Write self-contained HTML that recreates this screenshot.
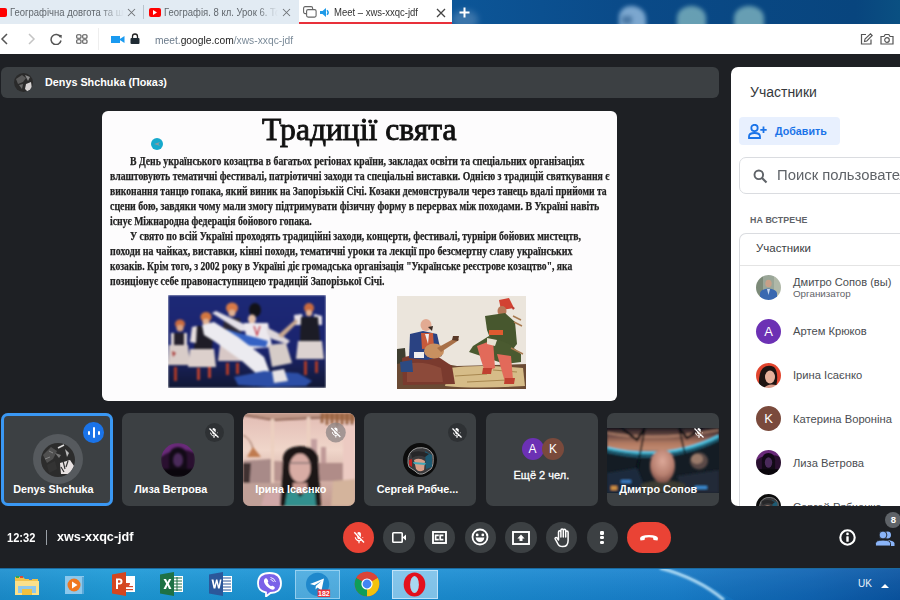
<!DOCTYPE html>
<html><head><meta charset="utf-8">
<style>
*{box-sizing:border-box;margin:0;padding:0}
html,body{width:900px;height:600px;overflow:hidden;background:#1e2024;font-family:"Liberation Sans",sans-serif;line-height:1}
.a{position:absolute}
.nw{white-space:nowrap}
#tabs{left:0;top:0;width:452px;height:24px;background:#e2ebf3}
#desk{left:452px;top:0;width:448px;height:24px;background:linear-gradient(90deg,#0c5698 0%,#0a4a88 40%,#08457e 90%,#0a5082 100%)}
#addr{left:0;top:24px;width:900px;height:30px;background:#fff}
#meet{left:0;top:54px;width:900px;height:514px;background:#1e2024}
#task{left:0;top:568px;width:900px;height:32px;background:linear-gradient(90deg,#1b9ad8 0%,#1a94d4 40%,#1576c4 60%,#0d62b4 80%,#0b5aae 100%)}
.tabt{font-size:10px;color:#61676d;top:7.8px;transform-origin:0 0}
.x{font-size:13px;color:#555;top:4px}
.ctrl{width:32px;height:32px;border-radius:50%;background:#3c4043;top:521px}
.tile{top:413px;width:112px;height:93px;border-radius:7px;background:#3c4043;overflow:hidden}
.tname{color:#fff;font-weight:bold;font-size:10.8px;white-space:nowrap}
.row{font-size:11.2px;color:#4a4d51;white-space:nowrap}
.av{width:25px;height:25px;border-radius:50%;left:755px}
.sl{left:0;font-family:"Liberation Serif",serif;font-weight:bold;font-size:12px;color:#222;-webkit-text-stroke:0.25px #222;white-space:nowrap;transform-origin:0 0}
</style></head><body>
<!-- TAB BAR -->
<div id="tabs" class="a"></div>
<div id="desk" class="a"></div>
<div id="addr" class="a"></div>
<div id="meet" class="a"></div>
<div id="task" class="a"></div>

<!-- tab 1 -->
<div class="a" style="left:0;top:8px;width:7px;height:9px;background:#f00;border-radius:0 2px 2px 0"></div>
<div class="a nw tabt" style="left:9.5px;width:120px;overflow:hidden;transform:scaleX(0.95)"><span style="-webkit-mask-image:linear-gradient(90deg,#000 78%,transparent 100%);display:inline-block;width:120px;overflow:hidden">Географічна довгота та шир</span></div>
<svg class="a" style="left:127px;top:8px" width="9" height="9"><path d="M1 1L8 8M8 1L1 8" stroke="#707478" stroke-width="1.05"/></svg>
<div class="a" style="left:143px;top:5px;width:1px;height:14px;background:#b9c3cc"></div>
<!-- tab 2 -->
<div class="a" style="left:149px;top:8px;width:12px;height:9px;background:#f00;border-radius:2px"></div>
<svg class="a" style="left:153px;top:10px" width="5" height="5"><path d="M0 0L4 2.5L0 5Z" fill="#fff"/></svg>
<div class="a nw tabt" style="left:164px;width:120px;overflow:hidden;transform:scaleX(0.95)"><span style="-webkit-mask-image:linear-gradient(90deg,#000 82%,transparent 100%);display:inline-block;width:120px;overflow:hidden">Географія. 8 кл. Урок 6. Топ</span></div>
<svg class="a" style="left:282px;top:8px" width="9" height="9"><path d="M1 1L8 8M8 1L1 8" stroke="#707478" stroke-width="1.05"/></svg>
<!-- active tab -->
<div class="a" style="left:299px;top:0;width:153px;height:24px;background:#fff"></div>
<div class="a" style="left:299px;top:22px;width:153px;height:2px;background:#e8303a"></div>
<svg class="a" style="left:303px;top:6px" width="14" height="12"><rect x="0.6" y="0.6" width="9" height="7" rx="1.5" fill="none" stroke="#666" stroke-width="1.1"/><rect x="3.6" y="3.6" width="9.5" height="7.5" rx="1.5" fill="#fff" stroke="#666" stroke-width="1.1"/></svg>
<svg class="a" style="left:320px;top:8px" width="10" height="9"><path d="M0 3H2.5L6 0V9L2.5 6H0Z" fill="#1e9ae8"/><path d="M7 2.2Q9.3 4.5 7 6.8" stroke="#1e9ae8" stroke-width="1.6" fill="none"/></svg>
<div class="a nw tabt" style="left:333.5px;color:#333;transform:scaleX(0.95)">Meet – xws-xxqc-jdf</div>
<svg class="a" style="left:436px;top:8px" width="10" height="10"><path d="M1 1L9 9M9 1L1 9" stroke="#444" stroke-width="1.3"/></svg>
<!-- plus -->
<svg class="a" style="left:459px;top:7px;z-index:2" width="11" height="11"><path d="M5.5 0.5V10.5M0.5 5.5H10.5" stroke="#fff" stroke-width="2"/></svg>
<!-- desktop icon blobs -->
<div class="a" style="left:452px;top:0;width:448px;height:24px;overflow:hidden">
<div class="a" style="left:0;top:10px;width:26px;height:20px;border-radius:50%;background:#5a8ab8;filter:blur(3px);opacity:.6"></div>
<div class="a" style="left:167px;top:6px;width:27px;height:24px;border-radius:45% 55% 0 0;background:#90b8dc;filter:blur(2px);opacity:.85"></div>
<div class="a" style="left:170px;top:16px;width:10px;height:8px;background:#2a5a8a;filter:blur(2px);opacity:.6"></div>
<div class="a" style="left:225px;top:6px;width:29px;height:24px;border-radius:50% 50% 0 0;background:#78aebc;filter:blur(2px);opacity:.85"></div>
<div class="a" style="left:282px;top:6px;width:30px;height:24px;border-radius:50% 50% 0 0;background:#78aebc;filter:blur(2px);opacity:.85"></div>
</div>


<!-- presenter bar -->
<div class="a" style="left:1px;top:67px;width:718px;height:31px;border-radius:6px;background:#3c4043"></div>
<svg class="a" style="left:14px;top:72.5px" width="19" height="19" viewBox="0 0 19 19"><defs><clipPath id="c3"><circle cx="9.5" cy="9.5" r="9.5"/></clipPath></defs><g clip-path="url(#c3)" style="filter:blur(0.35px)"><rect width="19" height="19" fill="#2a2a2a"/><path d="M2 6L8 2L12 5L9 9L4 11Z" fill="#5a5a5a"/><path d="M11 2L16 4L14 8Z" fill="#8a8a8a"/><path d="M12 11L17 9L18 16L14 19L11 16Z" fill="#d8d4d4"/><path d="M5 12L9 11L8 16Z" fill="#6a6a6a"/></g></svg>
<div class="a nw" style="left:45px;top:77px;color:#fff;font-weight:bold;font-size:10.8px">Denys Shchuka (Показ)</div>
<!-- slide -->
<div class="a" style="left:102px;top:111px;width:515px;height:290px;border-radius:6px;background:#fdfcfd"></div>
<div class="a" style="left:151px;top:138px;width:12px;height:12px;border-radius:50%;background:#17a9cc"></div>
<svg class="a" style="left:153px;top:141px" width="8" height="6"><path d="M1 3L7 1L5.5 3L7 5Z" fill="#8a9aa0"/></svg>
<div class="a nw" style="left:262px;top:112.5px;font-family:'Liberation Serif',serif;font-weight:normal;font-size:32px;color:#111;-webkit-text-stroke:0.9px #111;transform:scale(0.987,1);transform-origin:0 0">Традиції свята</div>
<div class="a sl" style="left:129.8px;top:154.65px;transform:scaleX(0.8119)">В День українського козацтва в багатьох регіонах країни, закладах освіти та спеціальних організаціях</div>
<div class="a sl" style="left:110.2px;top:169.65px;transform:scaleX(0.8144)">влаштовують тематичні фестивалі, патріотичні заходи та спеціальні виставки. Однією з традицій святкування є</div>
<div class="a sl" style="left:110.2px;top:184.65px;transform:scaleX(0.8071)">виконання танцю гопака, який виник на Запорізькій Січі. Козаки демонстрували через танець вдалі прийоми та</div>
<div class="a sl" style="left:110.2px;top:199.65px;transform:scaleX(0.8215)">сцени бою, завдяки чому мали змогу підтримувати фізичну форму в перервах між походами. В Україні навіть</div>
<div class="a sl" style="left:110.2px;top:214.65px;transform:scaleX(0.8123)">існує Міжнародна федерація бойового гопака.</div>
<div class="a sl" style="left:129.8px;top:229.65px;transform:scaleX(0.8126)">У свято по всій Україні проходять традиційні заходи, концерти, фестивалі, турніри бойових мистецтв,</div>
<div class="a sl" style="left:110.2px;top:244.65px;transform:scaleX(0.8251)">походи на чайках, виставки, кінні походи, тематичні уроки та лекції про безсмертну славу українських</div>
<div class="a sl" style="left:110.2px;top:259.65px;transform:scaleX(0.8009)">козаків. Крім того, з 2002 року в Україні діє громадська організація "Українське реєстрове козацтво", яка</div>
<div class="a sl" style="left:110.2px;top:274.65px;transform:scaleX(0.8160)">позиціонує себе правонаступницею традицій Запорізької Січі.</div>
<div class="a" style="left:168px;top:295px;width:158px;height:93px;overflow:hidden"><svg width="158" height="93" viewBox="0 0 158 93" style="filter:blur(0.8px)" filter="url(#bb)"><filter id="bb"><feGaussianBlur stdDeviation="0.8"/></filter>
<defs><linearGradient id="d1" x1="0" y1="0" x2="0" y2="1"><stop offset="0" stop-color="#1b2672"/><stop offset="0.6" stop-color="#18206a"/><stop offset="0.78" stop-color="#141a48"/><stop offset="1" stop-color="#0e1226"/></linearGradient></defs>
<rect width="158" height="93" fill="url(#d1)"/>
<rect x="0" y="0" width="158" height="93" fill="#2a3a90" opacity="0.15"/>
<!-- left girl -->
<ellipse cx="12" cy="29" rx="5" ry="4.5" fill="#c86a40"/>
<ellipse cx="12" cy="33" rx="3.5" ry="3.5" fill="#d8a080"/>
<path d="M3 38H19V50H3Z" fill="#e0d6d4"/>
<path d="M6 38H16V50H6Z" fill="#24202c"/>
<path d="M1 50H20L22 70H0Z" fill="#d8ccc8"/>
<path d="M4 56L8 58L5 62Z" fill="#a83a38"/>
<rect x="6" y="72" width="3" height="14" fill="#a83828"/>
<!-- girl 2 -->
<ellipse cx="38" cy="22" rx="5.5" ry="5" fill="#d27640"/>
<ellipse cx="38" cy="27" rx="3.5" ry="3.5" fill="#e0b090"/>
<path d="M28 31H46L44 54H26Z" fill="#1e1c26"/>
<path d="M24 32L29 31L28 48L22 47Z" fill="#e6dede"/>
<path d="M22 54H46L48 72H20Z" fill="#dcd0cc"/>
<rect x="29" y="73" width="3" height="12" fill="#b84030"/><rect x="40" y="72" width="3" height="11" fill="#b84030"/>
<!-- orange hair girl -->
<ellipse cx="64" cy="13" rx="6" ry="5.5" fill="#d87a48"/>
<ellipse cx="64" cy="18" rx="3.5" ry="3.5" fill="#e0b090"/>
<path d="M56 23H72L74 50H54Z" fill="#2a2634"/>
<path d="M52 50H76L78 66H50Z" fill="#d8c8c6"/>
<rect x="58" y="68" width="3" height="12" fill="#b03a28"/><rect x="68" y="68" width="3" height="11" fill="#b03a28"/>
<!-- central man arms/shirt -->
<path d="M44 18L48 16L78 30L80 36L72 36Z" fill="#e4e0e8"/>
<ellipse cx="87" cy="15" rx="6" ry="7" fill="#121218"/>
<ellipse cx="84" cy="24" rx="4" ry="4.5" fill="#e4c0a8"/>
<path d="M76 28H100L104 52L80 54Z" fill="#ece8ee"/>
<path d="M86 31L89 40L92 31" stroke="#c03040" stroke-width="1.2" fill="none"/>
<path d="M98 32L110 38L122 46L119 49L104 44L100 40Z" fill="#ddd6da"/>
<!-- blue sash -->
<path d="M58 34L78 40L100 46L98 52L74 50L56 40Z" fill="#3562c4"/>
<!-- white pants (kick) -->
<path d="M34 30L46 27L70 42L96 62L102 78L90 80L74 66L46 46L36 40Z" fill="#ecebf0"/>
<!-- seated man right -->
<path d="M100 50L118 48L124 68L104 72Z" fill="#d6ccc8"/>
<!-- blue bottom figure -->
<path d="M66 82L96 76L130 78L144 86L138 91L100 92L70 90Z" fill="#2c4ea6"/>
<path d="M104 76L116 74L120 86L106 88Z" fill="#e6e2e4"/>
<!-- right girl -->
<ellipse cx="141" cy="13" rx="5" ry="5" fill="#c86a40"/>
<ellipse cx="141" cy="18" rx="3.2" ry="3.2" fill="#e0b090"/>
<path d="M126 20L134 19L136 30L127 30Z" fill="#e8e2e8"/>
<path d="M146 19L154 21L154 30L147 30Z" fill="#e8e2e8"/>
<path d="M133 22H150L152 46H132Z" fill="#1c1c26"/>
<path d="M130 46H154L156 64H128Z" fill="#dcd2d0"/>
<rect x="136" y="66" width="3" height="14" fill="#a83a2a"/><rect x="147" y="66" width="3" height="12" fill="#a83a2a"/>
<path d="M110 40L128 24L130 27L114 43Z" fill="#c8a890"/>
</svg></div>
<div class="a" style="left:396.5px;top:295.5px;width:129.5px;height:93px;overflow:hidden"><svg width="130" height="93" viewBox="0 0 130 93" style="filter:blur(0.7px)">
<rect width="130" height="93" fill="#ebe5dc"/>
<path d="M0 67Q30 64 60 70L130 68V93H0Z" fill="#6a4a34"/>
<path d="M52 72Q80 68 126 72L128 90Q80 93 48 90Z" fill="#d6bc88"/>
<path d="M58 80L90 78M70 86L110 84M96 74L120 76" stroke="#a88850" stroke-width="1.2"/>
<path d="M0 53L8 52L9 66L0 68Z" fill="#3e3e30"/>
<!-- seated cossack -->
<path d="M5 62Q20 56 40 60L55 70L58 88L6 89Z" fill="#7a3a2e"/>
<path d="M10 68Q25 64 44 72L46 86L10 86Z" fill="#8c4a3a"/>
<path d="M3 66L15 64L16 76L4 76Z" fill="#2c4a82"/>
<path d="M13 38L26 35L40 38L45 60L30 64L12 62Z" fill="#2a4282"/>
<path d="M24 37L36 37L37 52L25 53Z" fill="#c85a3a"/>
<path d="M28 38L32 38L31 48Z" fill="#eee"/>
<ellipse cx="29" cy="29" rx="5.5" ry="6" fill="#e2aa92"/>
<path d="M31 31L36 30L35 35Z" fill="#3a2a22"/>
<ellipse cx="37" cy="55" rx="10" ry="7.5" fill="#c89060"/>
<path d="M40 52L60 41L62 44L44 56Z" fill="#a87048"/>
<path d="M56 40L62 40L61 45L55 44Z" fill="#5a3a28"/>
<rect x="17" y="56" width="10" height="6" fill="#f0eeee"/>
<!-- dancing cossack -->
<path d="M102 4L112 2L117 12L104 14Z" fill="#d24232"/>
<path d="M114 10L118 12L116 14Z" fill="#b83a30"/>
<ellipse cx="105" cy="15" rx="4.5" ry="5" fill="#b87858"/>
<path d="M88 20L108 17L118 26L120 48L112 58L96 50L90 34Z" fill="#47572e"/>
<path d="M76 50L92 40L112 48L124 58L124 66L108 68L90 62L72 56Z" fill="#4a5a30"/>
<path d="M92 34L106 34L106 39L92 39Z" fill="#e05a30"/>
<path d="M80 50L96 44L98 72L88 76L84 64Z" fill="#e26a5a"/>
<path d="M100 58L114 60L116 84L108 86L104 72Z" fill="#e26a5a"/>
<path d="M86 72L95 72L94 78L85 78Z" fill="#c04030"/><path d="M108 82L118 82L117 88L107 88Z" fill="#c04030"/>
<path d="M116 20L124 24M117 26L125 30M114 52L126 58" stroke="#a87a50" stroke-width="1.4"/>
<path d="M90 42L100 44L98 50L90 48Z" fill="#e8e0d0"/>
</svg></div>


<!-- tiles -->
<div class="a tile" style="left:1px"></div>
<div class="a" style="left:1px;top:413px;width:112px;height:93px;border-radius:7px;border:3px solid #3a98f4"></div>
<div class="a" style="left:32.5px;top:434.4px;width:50px;height:50px;border-radius:50%;background:#565a5e"></div>
<svg class="a" style="left:40.5px;top:442.5px" width="34" height="34" viewBox="0 0 34 34"><defs><clipPath id="c4"><circle cx="17" cy="17" r="17"/></clipPath></defs><g clip-path="url(#c4)" style="filter:blur(0.5px)">
<rect width="34" height="34" fill="#2c2c2c"/>
<path d="M2 12L10 4L16 8L12 16L6 20Z" fill="#505050"/>
<path d="M6 22L14 18L16 26L8 30Z" fill="#333"/>
<path d="M17 5L23 2" stroke="#ddd" stroke-width="1.8"/>
<path d="M24 6L28 10L26 14Z" fill="#bbb"/>
<path d="M14 10L20 12L18 15Z" fill="#777"/>
<path d="M19 20L29 17L33 23L29 31L20 31Z" fill="#e8e2e2"/>
<path d="M22 18L24 26M27 18L25 24M20 24L23 29" stroke="#333" stroke-width="1.2"/>
<path d="M8 8L12 10M4 16L9 14" stroke="#888" stroke-width="1"/>
</g></svg>
<div class="a" style="left:83.3px;top:422.3px;width:20.5px;height:20.5px;border-radius:50%;background:#1a73e8"></div>
<div class="a" style="left:92.5px;top:427px;width:2.2px;height:11px;border-radius:1px;background:#fff"></div>
<div class="a" style="left:87.5px;top:430.5px;width:2.2px;height:4px;border-radius:1px;background:#fff"></div>
<div class="a" style="left:97.5px;top:430.5px;width:2.2px;height:4px;border-radius:1px;background:#fff"></div>
<div class="a tname" style="left:13.2px;top:484.3px">Denys Shchuka</div>

<div class="a tile" style="left:122px"></div>
<div class="a" style="left:204.9px;top:423.0px;width:19px;height:19px;border-radius:50%;background:#2e3134"></div><svg class="a" style="left:208.4px;top:426.5px" width="12" height="12" viewBox="0 0 12 12"><path d="M4.3 2.2A1.8 1.8 0 0 1 7.7 2.5V5.5L4.3 2.2Z" fill="#fff"/><path d="M4.3 4.5V5.8A1.8 1.8 0 0 0 6.9 7.3Z" fill="#fff"/><path d="M2.6 5.6A3.4 3.4 0 0 0 8 8.3M9.3 6.2A3.4 3.4 0 0 0 9.4 5.6" stroke="#fff" stroke-width="1" fill="none"/><path d="M6 9V11" stroke="#fff" stroke-width="1"/><path d="M1.5 1.5L10.5 10.5" stroke="#fff" stroke-width="1.2"/></svg>
<svg class="a" style="left:161.2px;top:442.5px" width="34" height="34" viewBox="0 0 34 34"><defs><clipPath id="c5"><circle cx="17" cy="17" r="17"/></clipPath></defs><g clip-path="url(#c5)" style="filter:blur(0.8px)">
<rect width="34" height="34" fill="#2a1030"/>
<path d="M0 0H34V10Q17 2 0 14Z" fill="#6a2a7a"/>
<path d="M8 34V14Q9 4 17 4Q25 4 26 14V34Z" fill="#120a16"/>
<ellipse cx="17" cy="17" rx="5" ry="7" fill="#4a2a5a"/>
<rect x="0" y="26" width="34" height="8" fill="#0a060c"/>
</g></svg>
<div class="a tname" style="left:134.2px;top:484.3px">Лиза Ветрова</div>

<div class="a" style="left:243px;top:413px;width:112px;height:93px;border-radius:7px;overflow:hidden"><svg width="112" height="93" viewBox="0 0 112 93">
<defs><filter id="bl3"><feGaussianBlur stdDeviation="1"/></filter>
<linearGradient id="ig1" x1="0" y1="0" x2="0" y2="1"><stop offset="0" stop-color="#e2bcb4"/><stop offset="0.4" stop-color="#f0d6ca"/><stop offset="0.7" stop-color="#d4b0a6"/><stop offset="1" stop-color="#c09a90"/></linearGradient></defs>
<rect width="112" height="93" fill="url(#ig1)"/>
<g filter="url(#bl3)">
<path d="M0 0H112V4L30 7L0 2Z" fill="#c09888"/>
<path d="M0 2L30 7L112 3" stroke="#7a5040" stroke-width="1.5" fill="none"/>
<rect x="28" y="6" width="3" height="66" fill="#ecd0c0"/>
<rect x="64" y="4" width="3" height="64" fill="#ecd0c0"/>
<path d="M0 48L28 46V70H0Z" fill="#a88a88"/>
<path d="M31 48L64 50V68H31Z" fill="#b89490"/>
<rect x="68" y="26" width="6" height="30" fill="#c4a0a0"/>
<rect x="78" y="34" width="5" height="26" fill="#c09a98"/>
<path d="M67 50H100V68H67Z" fill="#b08c88"/>
<path d="M78 0H112V8L78 6Z" fill="#b07a5a"/><path d="M79 0V10M84 0V12M89 0V11M94 0V13M99 0V12M104 0V14M109 0V13" stroke="#94603e" stroke-width="2.6"/>
<rect x="100" y="12" width="12" height="58" fill="#eccac2"/>
<path d="M0 22Q8 26 10 36" stroke="#8a6050" stroke-width="1" fill="none"/>
<path d="M4 44L10 34L18 44Z" fill="#c07a50"/>
<path d="M0 50L8 50L6 80L0 82Z" fill="#403030"/>
<path d="M0 70H40V93H0Z" fill="#c0a098"/>
<path d="M90 68L112 66V93H88Z" fill="#d4b49c"/>
<path d="M22 80L42 78L44 93H18Z" fill="#d0a8a8"/>
<path d="M40 44Q42 34 57 33Q72 33 75 44L78 93H37Z" fill="#1e1614"/>
<ellipse cx="57" cy="55" rx="10.5" ry="14.5" fill="#d8aca4"/>
<path d="M46 50H68" stroke="#7a6868" stroke-width="1.2"/>
<path d="M50 70H64V80H50Z" fill="#c89890"/>
<path d="M44 80L52 77L57 84L64 77L72 80L73 93H42Z" fill="#33908e"/>
</g>
<circle cx="92.8" cy="19.5" r="10" fill="#8c8484" opacity="0.75"/>
<g transform="translate(86.8,13.5)"><path d="M4.3 2.2A1.8 1.8 0 0 1 7.7 2.5V5.5L4.3 2.2Z" fill="#fff"/><path d="M4.3 4.5V5.8A1.8 1.8 0 0 0 6.9 7.3Z" fill="#fff"/><path d="M2.6 5.6A3.4 3.4 0 0 0 8 8.3M9.3 6.2A3.4 3.4 0 0 0 9.4 5.6" stroke="#fff" stroke-width="1" fill="none"/><path d="M6 9V11" stroke="#fff" stroke-width="1"/><path d="M1.5 1.5L10.5 10.5" stroke="#fff" stroke-width="1.2"/></g>
</svg></div>
<div class="a tname" style="left:255.2px;top:484.3px">Ірина Ісаєнко</div>

<div class="a tile" style="left:364px"></div>
<div class="a" style="left:447.5px;top:423.0px;width:19px;height:19px;border-radius:50%;background:#2e3134"></div><svg class="a" style="left:451px;top:426.5px" width="12" height="12" viewBox="0 0 12 12"><path d="M4.3 2.2A1.8 1.8 0 0 1 7.7 2.5V5.5L4.3 2.2Z" fill="#fff"/><path d="M4.3 4.5V5.8A1.8 1.8 0 0 0 6.9 7.3Z" fill="#fff"/><path d="M2.6 5.6A3.4 3.4 0 0 0 8 8.3M9.3 6.2A3.4 3.4 0 0 0 9.4 5.6" stroke="#fff" stroke-width="1" fill="none"/><path d="M6 9V11" stroke="#fff" stroke-width="1"/><path d="M1.5 1.5L10.5 10.5" stroke="#fff" stroke-width="1.2"/></svg>
<svg class="a" style="left:403px;top:442.5px" width="34" height="34" viewBox="0 0 34 34"><g style="filter:blur(0.4px)">
<circle cx="17" cy="17" r="17" fill="#0c0c0c"/>
<path d="M5 20Q4 8 14 5Q26 3 30 12Q31 22 28 26L22 30Q16 33 12 28L6 24Z" fill="#3a3a3c" stroke="#a8a8a8" stroke-width="0.9"/>
<path d="M22 8L29 12L29 24L23 26Z" fill="#1e5a72"/>
<path d="M6 17L9 16L9 24L6 22Z" fill="#c02020"/>
<path d="M11 17Q16 14 22 18L21 27Q16 30 13 26Z" fill="#d8a08a"/>
<path d="M10 19L23 20L22 22L11 21Z" fill="#40a8b8"/>
<path d="M8 10Q16 6 26 11L22 14Q15 11 9 15Z" fill="#262628"/>
</g></svg>
<div class="a tname" style="left:376.7px;top:484.3px">Сергей Рябче...</div>

<div class="a tile" style="left:486px"></div>
<div class="a" style="left:521.5px;top:437.6px;width:22px;height:22px;border-radius:50%;background:#6c31b4"></div>
<div class="a nw" style="left:521.5px;top:443px;width:22px;text-align:center;font-size:12px;color:#fff">A</div>
<div class="a" style="left:542px;top:437.6px;width:22px;height:22px;border-radius:50%;background:#7a4a3c"></div>
<div class="a nw" style="left:542px;top:443px;width:22px;text-align:center;font-size:12px;color:#fff">K</div>
<div class="a nw" style="left:513.5px;top:469.6px;font-size:11px;color:#fff;-webkit-text-stroke:0.3px #fff">Ещё 2 чел.</div>

<div class="a" style="left:607px;top:413px;width:112px;height:93px;border-radius:7px;overflow:hidden;background:#3c4043"><svg class="a" style="left:0;top:14.7px" width="112" height="65" viewBox="0 0 112 65">
<defs><filter id="bl4"><feGaussianBlur stdDeviation="1"/></filter>
<linearGradient id="pg1" x1="0" y1="0" x2="0" y2="1"><stop offset="0" stop-color="#221c22"/><stop offset="0.3" stop-color="#6a4a44"/><stop offset="0.6" stop-color="#b07860"/><stop offset="0.85" stop-color="#c08a70"/><stop offset="1" stop-color="#7a5448"/></linearGradient></defs>
<rect width="112" height="65" fill="#141c24"/>
<g filter="url(#bl4)">
<path d="M0 0H112V8Q60 34 0 20Z" fill="url(#pg1)"/>
<path d="M0 5Q50 14 112 2" stroke="#d8a080" stroke-width="2" fill="none" opacity="0.6"/>
<path d="M0 20Q60 34 112 8" stroke="#48c8e8" stroke-width="2.8" fill="none"/>
<path d="M0 23.5Q60 37.5 112 11.5" stroke="#1a5a70" stroke-width="3" fill="none"/>
<path d="M0 0L14 0L30 12L38 0M72 0L80 10L96 0" stroke="#0a0e12" stroke-width="2.5" fill="none"/>
<path d="M38 0L30 42M72 0L78 26" stroke="#0a1014" stroke-width="1.6"/>
<ellipse cx="92" cy="33" rx="9" ry="8.5" fill="#5a4a46"/>
<ellipse cx="90" cy="31" rx="6" ry="5" fill="#9a7a6a"/>
<path d="M0 45L30 40L40 65H0Z" fill="#1c2c3c"/>
<path d="M70 48L112 42V65H76Z" fill="#202c38"/>
<rect x="4" y="58" width="6" height="4" fill="#d09040"/>
<rect x="14" y="52" width="10" height="3" fill="#3a7ac0"/>
<rect x="88" y="58" width="12" height="3" fill="#3a8ad0"/>
<path d="M34 56Q56 48 78 56V65H34Z" fill="#3a3a30"/>
<radialGradient id="fg" cx="0.5" cy="0.35" r="0.6"><stop offset="0" stop-color="#dca898"/><stop offset="0.7" stop-color="#b88070"/><stop offset="1" stop-color="#8a5a50"/></radialGradient><ellipse cx="55.5" cy="38" rx="12.5" ry="16.5" fill="url(#fg)"/>
</g>
</svg>
<svg class="a" style="left:86px;top:13.5px" width="12" height="12" viewBox="0 0 12 12"><path d="M4.3 2.2A1.8 1.8 0 0 1 7.7 2.5V5.5L4.3 2.2Z" fill="#fff"/><path d="M4.3 4.5V5.8A1.8 1.8 0 0 0 6.9 7.3Z" fill="#fff"/><path d="M2.6 5.6A3.4 3.4 0 0 0 8 8.3M9.3 6.2A3.4 3.4 0 0 0 9.4 5.6" stroke="#fff" stroke-width="1" fill="none"/><path d="M6 9V11" stroke="#fff" stroke-width="1"/><path d="M1.5 1.5L10.5 10.5" stroke="#fff" stroke-width="1.2"/></svg>
</div>
<div class="a tname" style="left:619.2px;top:484.3px">Дмитро Сопов</div>


<!-- control bar -->
<div class="a nw" style="left:7.3px;top:530.6px;font-size:13px;font-weight:bold;color:#fff;transform:scaleX(0.855);transform-origin:0 0">12:32</div>
<div class="a" style="left:46px;top:530px;width:1px;height:15px;background:#9aa0a6"></div>
<div class="a nw" style="left:56.5px;top:531px;font-size:12.4px;font-weight:bold;color:#fff;transform:scaleX(1.02);transform-origin:0 0">xws-xxqc-jdf</div>
<div class="a" style="left:343.0px;top:521.5px;width:31.4px;height:31.4px;border-radius:50%;background:#ea4335"></div>
<svg class="a" style="left:352.5px;top:531px" width="12" height="13" viewBox="0 0 12 13"><path d="M4.2 2.3A1.9 1.9 0 0 1 7.9 2.6V6.2Z" fill="#fff"/><path d="M4.2 4.6V6.3A1.9 1.9 0 0 0 7.2 7.8Z" fill="#fff"/><path d="M2.3 6.2A3.8 3.8 0 0 0 8.2 9.1M9.6 6.8A3.8 3.8 0 0 0 9.8 6.2" stroke="#fff" stroke-width="1.2" fill="none"/><path d="M6 10V12.2" stroke="#fff" stroke-width="1.2"/><path d="M1.3 1.3L11 11.5" stroke="#fff" stroke-width="1.4"/></svg>
<div class="a" style="left:383.3px;top:521.5px;width:31.4px;height:31.4px;border-radius:50%;background:#3c4043"></div>
<svg class="a" style="left:392px;top:532px" width="15" height="11" viewBox="0 0 15 11"><rect x="0.8" y="0.8" width="9.4" height="9.4" rx="0.8" fill="none" stroke="#fff" stroke-width="1.6"/><path d="M10.5 5.5L14 2.5V8.5Z" fill="#fff"/></svg>
<div class="a" style="left:423.6px;top:521.5px;width:31.4px;height:31.4px;border-radius:50%;background:#3c4043"></div>
<svg class="a" style="left:432.3px;top:531px" width="15" height="13" viewBox="0 0 15 13"><rect x="1" y="1" width="13" height="11" fill="none" stroke="#fff" stroke-width="1.9"/><path d="M6.8 4.3H3.6V8.7H6.8M11.4 4.3H8.2V8.7H11.4" stroke="#fff" stroke-width="1.7" fill="none"/></svg>
<div class="a" style="left:464.7px;top:521.5px;width:31.4px;height:31.4px;border-radius:50%;background:#3c4043"></div>
<svg class="a" style="left:471.4px;top:528.2px" width="18" height="18" viewBox="0 0 18 18"><circle cx="9" cy="9" r="7.5" fill="none" stroke="#fff" stroke-width="1.8"/><circle cx="6.2" cy="6.9" r="1.4" fill="#fff"/><circle cx="11.8" cy="6.9" r="1.4" fill="#fff"/><path d="M4.6 9.6H13.4Q12.8 14 9 14T4.6 9.6Z" fill="#fff"/></svg>
<div class="a" style="left:505.3px;top:521.5px;width:31.4px;height:31.4px;border-radius:50%;background:#3c4043"></div>
<svg class="a" style="left:512px;top:530.5px" width="18" height="14" viewBox="0 0 18 14"><rect x="1" y="1" width="16" height="12" fill="none" stroke="#fff" stroke-width="1.9"/><path d="M9 3.6L12.6 7.4H10.5V10H7.5V7.4H5.4Z" fill="#fff"/></svg>
<div class="a" style="left:546.0px;top:521.5px;width:31.4px;height:31.4px;border-radius:50%;background:#3c4043"></div>
<svg class="a" style="left:553.5px;top:527.5px" width="16" height="20" viewBox="0 0 16 20"><path d="M4.5 12V4A1.2 1.2 0 0 1 6.9 4V9V2.2A1.2 1.2 0 0 1 9.3 2.2V9V2.5A1.2 1.2 0 0 1 11.7 2.5V9V4.2A1.2 1.2 0 0 1 14.1 4.2V12.5Q14.1 18.6 8.6 18.6Q5 18.6 3.5 15.2L1.2 11A1.1 1.1 0 0 1 3 9.8L4.5 12Z" fill="none" stroke="#fff" stroke-width="1.5" stroke-linejoin="round"/></svg>
<div class="a" style="left:586.5px;top:521.5px;width:31.4px;height:31.4px;border-radius:50%;background:#3c4043"></div>
<div class="a" style="left:600.3px;top:531.2px;width:3.8px;height:3.4px;border-radius:1.2px;background:#fff"></div>
<div class="a" style="left:600.3px;top:535.9px;width:3.8px;height:3.4px;border-radius:1.2px;background:#fff"></div>
<div class="a" style="left:600.3px;top:540.6px;width:3.8px;height:3.4px;border-radius:1.2px;background:#fff"></div>
<div class="a" style="left:627px;top:521.7px;width:44px;height:31px;border-radius:16px;background:#ea4335"></div>
<svg class="a" style="left:639px;top:533px" width="20" height="9" viewBox="0 0 20 9"><path d="M1 5.5Q1 2 10 2T19 5.5L18.5 7.5L14.5 7L14 4.8Q12 4.2 10 4.2T6 4.8L5.5 7L1.5 7.5Z" fill="#fff"/></svg>
<svg class="a" style="left:838.5px;top:529px" width="17" height="17" viewBox="0 0 17 17"><circle cx="8.5" cy="8.5" r="7.2" fill="none" stroke="#fff" stroke-width="2.1"/><rect x="7.3" y="7.2" width="2.4" height="5.6" rx="0.6" fill="#fff"/><circle cx="8.5" cy="4.9" r="1.3" fill="#fff"/></svg>
<svg class="a" style="left:875px;top:530px" width="20" height="17" viewBox="0 0 20 17"><circle cx="12.6" cy="5" r="3.4" fill="#8ab4f8"/><path d="M12 10Q19.5 10.6 19.5 13.5V16H12Z" fill="#8ab4f8"/><circle cx="8" cy="5" r="3.9" fill="#8ab4f8" stroke="#1e2024" stroke-width="0.9"/><path d="M0.5 16V13.5Q0.5 10.1 8 10.1T15.5 13.5V16Z" fill="#8ab4f8" stroke="#1e2024" stroke-width="0.9"/></svg>
<div class="a" style="left:885.4px;top:511.6px;width:16px;height:16px;border-radius:50%;background:#5f6368"></div>
<div class="a nw" style="left:885.4px;top:515px;width:16px;text-align:center;font-size:9.5px;font-weight:bold;color:#fff">8</div>

<!-- participants panel -->
<div class="a" style="left:731px;top:67px;width:169px;height:439px;border-radius:7px 0 0 7px;background:#fff;overflow:hidden">
<div class="a nw" style="left:19px;top:18.1px;font-size:14px;color:#35383c">Участники</div>
<div class="a" style="left:8px;top:50px;width:101px;height:28px;border-radius:4px;background:#e8f0fe"></div>
<svg class="a" style="left:17px;top:57px" width="20" height="15"><circle cx="6.5" cy="4" r="3.2" fill="none" stroke="#1a73e8" stroke-width="1.8"/><path d="M1 14V12.5C1 10 4 9 6.5 9S12 10 12 12.5V14Z" fill="none" stroke="#1a73e8" stroke-width="1.8"/><path d="M15.5 2.5V9M12.3 5.8H18.7" stroke="#1a73e8" stroke-width="1.8"/></svg>
<div class="a nw" style="left:44px;top:59.4px;font-size:10.7px;font-weight:bold;color:#1a73e8">Добавить</div>
<div class="a" style="left:8px;top:90px;width:180px;height:37px;border-radius:7px;border:1px solid #dadce0"></div>
<svg class="a" style="left:22px;top:102px" width="15" height="15"><circle cx="5.8" cy="5.8" r="4.3" fill="none" stroke="#5f6368" stroke-width="1.9"/><path d="M9 9L13.5 13.5" stroke="#5f6368" stroke-width="2.1"/></svg>
<div class="a nw" style="left:46px;top:101.2px;font-size:14px;color:#5f6368;transform:scaleX(1.06);transform-origin:0 0">Поиск пользователей</div>
<div class="a nw" style="left:19px;top:148.5px;font-size:8.8px;font-weight:bold;color:#5f6368;letter-spacing:0.1px">НА ВСТРЕЧЕ</div>
<div class="a" style="left:8px;top:166px;width:180px;height:300px;border-radius:7px 0 0 0;border:1px solid #dadce0;border-right:none;border-bottom:none"></div>
<div class="a nw" style="left:25px;top:175.7px;font-size:11.5px;color:#3c4043">Участники</div>
<div class="a" style="left:9px;top:198px;width:170px;height:1px;background:#e4e4e4"></div>

<svg class="a" style="left:24.5px;top:207.5px" width="25" height="25" viewBox="0 0 25 25"><defs><clipPath id="c1"><circle cx="12.5" cy="12.5" r="12.5"/></clipPath></defs><g clip-path="url(#c1)" style="filter:blur(0.4px)"><rect width="25" height="25" fill="#9aa698"/><rect x="0" y="0" width="7" height="25" fill="#7c8a78"/><rect x="18" y="0" width="7" height="25" fill="#b0b8a8"/><ellipse cx="12.5" cy="8.5" rx="3.2" ry="3.8" fill="#c8a088"/><path d="M4 25V18Q5 14 12.5 13.5Q20 14 21 18V25Z" fill="#3a68b0"/><path d="M11 14L12.5 20L14 14Z" fill="#c8d8f0"/></g></svg>
<div class="a nw row" style="left:62px;top:209.6px;font-size:11.1px">Дмитро Сопов (вы)</div>
<div class="a nw" style="left:62px;top:222.1px;font-size:9.8px;color:#5f6368">Организатор</div>
<div class="a" style="left:25px;top:252px;width:25px;height:25px;border-radius:50%;background:#6c31b4"></div>
<div class="a nw" style="left:25px;top:258px;width:25px;text-align:center;font-size:13px;color:#fff">A</div>
<div class="a nw row" style="left:62px;top:259.1px">Артем Крюков</div>
<svg class="a" style="left:24.5px;top:295.5px" width="25" height="25" viewBox="0 0 25 25"><defs><clipPath id="c2"><circle cx="12.5" cy="12.5" r="12.5"/></clipPath></defs><g clip-path="url(#c2)" style="filter:blur(0.3px)"><rect width="25" height="25" fill="#e2452e"/><path d="M3 25Q2 10 7 5Q12 1 18 4Q22 8 21 18L20 25Z" fill="#1e1412"/><ellipse cx="14" cy="14" rx="5" ry="6.5" fill="#e6b09a"/><path d="M8 25Q12 20 20 22V25Z" fill="#d89a88"/></g></svg>
<div class="a nw row" style="left:62px;top:303.1px">Ірина Ісаєнко</div>
<div class="a" style="left:25px;top:339px;width:25px;height:25px;border-radius:50%;background:#7a4a3c"></div>
<div class="a nw" style="left:25px;top:345px;width:25px;text-align:center;font-size:13px;color:#fff">K</div>
<div class="a nw row" style="left:62px;top:347.1px">Катерина Вороніна</div>
<svg class="a" style="left:24.5px;top:382.5px" width="25" height="25" viewBox="0 0 34 34"><defs><clipPath id="c6"><circle cx="17" cy="17" r="17"/></clipPath></defs><g clip-path="url(#c6)" style="filter:blur(0.6px)"><rect width="34" height="34" fill="#2a1030"/><path d="M0 0H34V10Q17 2 0 14Z" fill="#6a2a7a"/><path d="M8 34V14Q9 4 17 4Q25 4 26 14V34Z" fill="#120a16"/><ellipse cx="17" cy="17" rx="5" ry="7" fill="#4a2a5a"/><rect x="0" y="26" width="34" height="8" fill="#0a060c"/></g></svg>
<div class="a nw row" style="left:62px;top:391.1px">Лиза Ветрова</div>
<svg class="a" style="left:24.5px;top:426.5px" width="25" height="25" viewBox="0 0 34 34"><g style="filter:blur(0.3px)"><circle cx="17" cy="17" r="17" fill="#0c0c0c"/><path d="M5 20Q4 8 14 5Q26 3 30 12Q31 22 28 26L22 30Q16 33 12 28L6 24Z" fill="#3a3a3c" stroke="#a8a8a8" stroke-width="0.9"/><path d="M22 8L29 12L29 24L23 26Z" fill="#1e5a72"/><path d="M6 17L9 16L9 24L6 22Z" fill="#c02020"/><path d="M11 17Q16 14 22 18L21 27Q16 30 13 26Z" fill="#d8a08a"/><path d="M10 19L23 20L22 22L11 21Z" fill="#40a8b8"/><path d="M8 10Q16 6 26 11L22 14Q15 11 9 15Z" fill="#262628"/></g></svg>
<div class="a nw row" style="left:62px;top:435.1px">Сергей Рябченко</div>
</div>

<!-- taskbar -->
<svg class="a" style="left:0;top:568px" width="900" height="32" viewBox="0 0 900 32">
<defs>
<linearGradient id="tb" x1="0" y1="0" x2="1" y2="0"><stop offset="0" stop-color="#1a8fd0"/><stop offset="0.12" stop-color="#1c9ad8"/><stop offset="0.5" stop-color="#1a8ed4"/><stop offset="0.75" stop-color="#1780ce"/><stop offset="0.9" stop-color="#106abc"/><stop offset="1" stop-color="#0a58a8"/></linearGradient>
<linearGradient id="tbv" x1="0" y1="0" x2="0" y2="1"><stop offset="0" stop-color="#fff" stop-opacity="0.08"/><stop offset="1" stop-color="#000" stop-opacity="0.06"/></linearGradient>
<filter id="tbl"><feGaussianBlur stdDeviation="1.2"/></filter>
</defs>
<rect width="900" height="32" fill="url(#tb)"/>
<rect width="900" height="32" fill="url(#tbv)"/>
<path d="M660 0Q698 10 724 32" stroke="#bfe4f8" stroke-width="3" fill="none" filter="url(#tbl)" opacity="0.9"/>
<path d="M668 0Q706 14 734 32L900 32V0Z" fill="#0a3e80" opacity="0.12"/>
<rect y="0" width="900" height="1" fill="#1a6aa0"/>
</svg>
<!-- explorer -->
<svg class="a" style="left:14px;top:574px" width="26" height="22" viewBox="0 0 26 22">
<path d="M1 3H9L11 5H24V20H1Z" fill="#f2c24a"/>
<rect x="2" y="2" width="3" height="2" fill="#3aa84a"/><rect x="6" y="2" width="3" height="2" fill="#d84a3a"/><rect x="15" y="4" width="3" height="2" fill="#3a8ad8"/>
<path d="M1 7H25V21H1Z" fill="#fbe08a"/>
<path d="M4 12H22V19H4Z" fill="#8ec8ec"/>
<path d="M8 15H18V21H8Z" fill="#f0c040"/>
</svg>
<!-- wmp -->
<svg class="a" style="left:65px;top:576px" width="20" height="18" viewBox="0 0 20 18">
<rect x="0" y="0" width="19" height="18" fill="#8cc8ec"/><rect x="17" y="1" width="2" height="17" fill="#5aa8d8"/>
<circle cx="9" cy="9" r="6.5" fill="#f07820"/><path d="M7 5.5L12.5 9L7 12.5Z" fill="#fff"/>
</svg>
<!-- ppt -->
<svg class="a" style="left:112px;top:572px" width="24" height="24" viewBox="0 0 24 24">
<rect x="10" y="4" width="13" height="16" fill="#fff"/><path d="M14 7A4 4 0 1 0 18 11H14Z" fill="#d8482a"/><rect x="13" y="14" width="8" height="1.2" fill="#d8482a"/><rect x="13" y="17" width="8" height="1.2" fill="#d8482a"/>
<path d="M0 2.5L14 0V24L0 21.5Z" fill="#d4461f"/>
<path d="M4 17V6.5H7.6Q10.5 6.5 10.5 9.5T7.6 12.5H6V17Z" fill="#fff"/><path d="M6 8.3V10.8H7.4Q8.5 10.8 8.5 9.5T7.4 8.3Z" fill="#d4461f"/>
</svg>
<!-- excel -->
<svg class="a" style="left:160px;top:572px" width="24" height="24" viewBox="0 0 24 24">
<rect x="10" y="4" width="13" height="16" fill="#fff"/>
<path d="M13 6H22M13 9H22M13 12H22M13 15H22M13 18H22M17 5V19" stroke="#1e7145" stroke-width="1"/>
<path d="M0 2.5L14 0V24L0 21.5Z" fill="#1e7145"/>
<path d="M3.5 7H6L7.5 10L9 7H11.3L8.8 11.8L11.5 17H9L7.5 13.6L6 17H3.5L6.2 11.8Z" fill="#fff"/>
</svg>
<!-- word -->
<svg class="a" style="left:208.5px;top:572px" width="24" height="24" viewBox="0 0 24 24">
<rect x="10" y="4" width="13" height="16" fill="#fff"/>
<path d="M13 6H22M13 9H22M13 12H22M13 15H22M13 18H22" stroke="#2b579a" stroke-width="1.2"/>
<path d="M0 2.5L14 0V24L0 21.5Z" fill="#2b579a"/>
<path d="M2.5 7.5H4.5L5.6 13.5L7 7.5H8.4L9.8 13.5L10.9 7.5H12.5L10.7 16.5H9L7.7 11L6.4 16.5H4.6Z" fill="#fff"/>
</svg>
<!-- viber -->
<svg class="a" style="left:257px;top:572px" width="25" height="25" viewBox="0 0 25 25">
<path d="M12.5 1C19.5 1 24 4.5 24 11.5S19.5 21 13.5 21L9 24.5V20.5Q1 19 1 11.5C1 4.5 5.5 1 12.5 1Z" fill="#7a62e8" stroke="#fff" stroke-width="1.8"/>
<path d="M8 6.5Q9.5 5.5 10.5 7.5L11.2 9Q11.5 10 10.6 10.6Q11.5 13 14 14.2Q14.6 13.4 15.6 13.8L17 14.6Q18.6 15.6 17.4 17Q16 18.4 13.4 17Q8.6 14.4 7 10Q6.5 7.6 8 6.5Z" fill="#fff"/>
<path d="M13.5 5.5Q17.5 6 18.5 10M13.5 7.5Q16 8 16.5 10" stroke="#fff" stroke-width="0.9" fill="none"/>
</svg>
<!-- telegram button -->
<div class="a" style="left:295px;top:570px;width:45px;height:29px;background:rgba(160,215,245,0.38);border:1px solid rgba(200,235,255,0.55)"></div>
<svg class="a" style="left:305px;top:571.5px" width="27" height="26" viewBox="0 0 27 26">
<circle cx="12.6" cy="12.3" r="11.6" fill="#1f88cc"/>
<path d="M5 12L19 6.5L16.5 18.5L12.5 15.5L10.5 17.5L10.8 14L16.5 9L9.5 13.3Z" fill="#fff"/>
<rect x="12.6" y="17.5" width="12.5" height="7.5" fill="#e8333a"/>
<text x="18.85" y="24" font-family="Liberation Sans" font-size="7" font-weight="bold" fill="#fff" text-anchor="middle">182</text>
</svg>
<!-- chrome -->
<svg class="a" style="left:353.5px;top:571px" width="26" height="26" viewBox="0 0 26 26">
<circle cx="13" cy="13" r="12.3" fill="#db4437"/>
<path d="M13 13L2.35 6.85A12.3 12.3 0 0 0 13 25.3Z" fill="#0f9d58"/>
<path d="M13 13L13 25.3A12.3 12.3 0 0 0 23.65 6.85Z" fill="#f4c20d"/>
<path d="M13 13L2.35 6.85A12.3 12.3 0 0 1 23.65 6.85Z" fill="#db4437"/>
<circle cx="13" cy="13" r="5.6" fill="#fff"/>
<circle cx="13" cy="13" r="4.4" fill="#4285f4"/>
</svg>
<!-- opera button -->
<div class="a" style="left:392px;top:570px;width:46px;height:29px;background:rgba(190,228,248,0.62);border:1px solid rgba(220,240,255,0.7)"></div>
<svg class="a" style="left:403px;top:571.5px" width="23" height="25" viewBox="0 0 23 25">
<ellipse cx="11.5" cy="12.5" rx="10.8" ry="12" fill="#e3101c"/>
<ellipse cx="11.5" cy="12.5" rx="4.4" ry="8.6" fill="#a8d8f0"/>
</svg>
<div class="a nw" style="left:858px;top:578.5px;font-size:10px;color:#e8f2fa">UK</div>
<svg class="a" style="left:881px;top:583px" width="8" height="5"><path d="M0 5L4 1L8 5Z" fill="#fff"/></svg>

<!-- address bar -->
<svg class="a" style="left:0;top:33px" width="10" height="12"><path d="M7 1L2 6L7 11" stroke="#555" stroke-width="1.5" fill="none"/></svg>
<svg class="a" style="left:27px;top:33px" width="10" height="12"><path d="M2 1L7 6L2 11" stroke="#c4c4c4" stroke-width="1.5" fill="none"/></svg>
<svg class="a" style="left:50px;top:33px" width="13" height="12"><path d="M10.5 4.2A5 5 0 1 0 11 7.5" stroke="#555" stroke-width="1.5" fill="none"/><path d="M8 1.8L11.8 2L11.5 5.6Z" fill="#555"/></svg>
<svg class="a" style="left:76px;top:34px" width="12" height="10"><rect x="0.7" y="0.7" width="4.3" height="3.6" rx="1" fill="none" stroke="#555" stroke-width="1.1"/><rect x="6.7" y="0.7" width="4.3" height="3.6" rx="1" fill="none" stroke="#555" stroke-width="1.1"/><rect x="0.7" y="5.7" width="4.3" height="3.6" rx="1" fill="none" stroke="#555" stroke-width="1.1"/><rect x="6.7" y="5.7" width="4.3" height="3.6" rx="1" fill="none" stroke="#555" stroke-width="1.1"/></svg>
<div class="a" style="left:98px;top:28px;width:1px;height:22px;background:#eee"></div>
<svg class="a" style="left:111px;top:36px" width="14" height="8"><rect x="0" y="0" width="9" height="7" fill="#1a9af0"/><path d="M8 3.5L13.5 0V7Z" fill="#1a9af0"/></svg>
<svg class="a" style="left:130px;top:33px" width="10" height="11"><path d="M2.5 5V3.5A2.5 2.5 0 0 1 7.5 3.5V5" stroke="#222" stroke-width="1.3" fill="none"/><rect x="0.5" y="5" width="9" height="6" rx="1" fill="#1e2a33"/></svg>
<div class="a nw" style="left:155px;top:34.1px;font-size:11.6px;color:#222;transform:scaleX(0.885);transform-origin:0 0"><span style="color:#6a7a8a">meet.</span>google.com<span style="color:#7a8a98">/xws-xxqc-jdf</span></div>
<svg class="a" style="left:860px;top:33px" width="13" height="12"><path d="M6 1.5H1.5V11H11V6.5" stroke="#555" stroke-width="1.2" fill="none"/><path d="M4.5 8.5L5 6L10.5 0.8L12.2 2.5L6.8 8Z" stroke="#555" stroke-width="1.1" fill="none"/></svg>
<svg class="a" style="left:880px;top:33px" width="14" height="12"><path d="M1 3.5H4L5.2 1.5H8.8L10 3.5H13V11H1Z" stroke="#555" stroke-width="1.2" fill="none"/><circle cx="7" cy="7" r="2.3" stroke="#555" stroke-width="1.2" fill="none"/></svg>

</body></html>
